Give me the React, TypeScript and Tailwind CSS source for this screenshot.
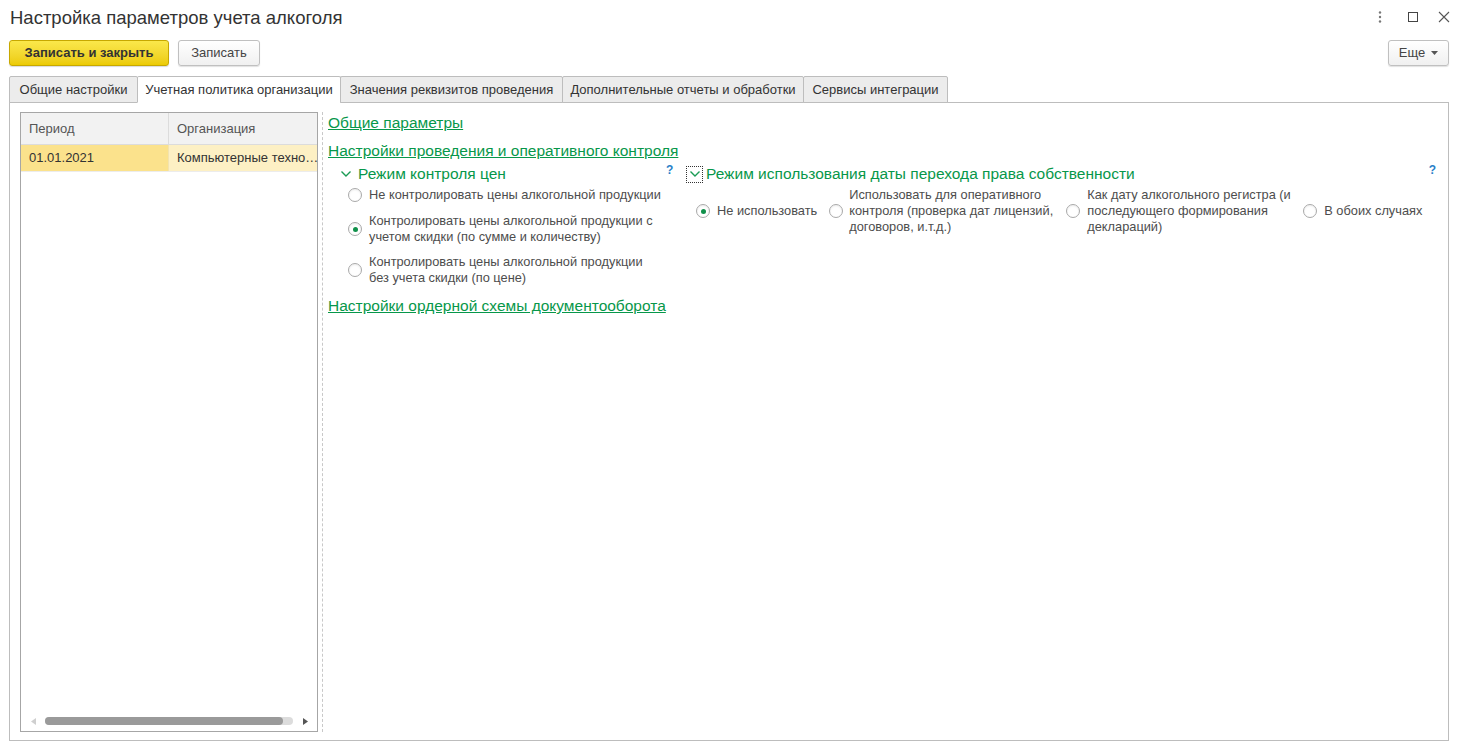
import React from 'react';

const GREEN = 'text-[#07974a]';

const Radio: React.FC<{ checked?: boolean }> = ({ checked }) => (
  <span className="w-[14px] h-[14px] shrink-0 rounded-full border border-[#a9a9a9] bg-white flex items-center justify-center shadow-[inset_0_1px_2px_rgba(0,0,0,0.08)]">
    {checked && <span className="w-[5px] h-[5px] rounded-full bg-[#10904a]" />}
  </span>
);

const Chevron: React.FC = () => (
  <svg width="12" height="8" viewBox="0 0 12 8" className="shrink-0">
    <path d="M1.5 1.5 L6 6 L10.5 1.5" fill="none" stroke="#1a9b54" strokeWidth="1.4" />
  </svg>
);

const tabs = [
  { label: 'Общие настройки', w: 'w-[129px]' },
  { label: 'Учетная политика организации', w: 'w-[204px]', active: true },
  { label: 'Значения реквизитов проведения', w: 'w-[223px]' },
  { label: 'Дополнительные отчеты и обработки', w: 'w-[242px]' },
  { label: 'Сервисы интеграции', w: 'w-[145px]' },
];

export default function App() {
  return (
    <div className="w-[1458px] h-[743px] bg-white font-['Liberation_Sans',Arial,sans-serif] text-[#4d4d4d] flex flex-col overflow-hidden">
      {/* Title bar */}
      <div className="h-[40px] flex items-start pl-[10px] pr-[8px] pt-[7px]">
        <div className="text-[18.5px] leading-[22px] text-[#333]">Настройка параметров учета алкоголя</div>
        <div className="ml-auto flex items-center gap-[20px] pt-[3px] text-[#555]">
          <svg width="4" height="14" viewBox="0 0 4 14">
            <circle cx="2" cy="2.5" r="1.2" fill="#777" />
            <circle cx="2" cy="7" r="1.2" fill="#777" />
            <circle cx="2" cy="11.5" r="1.2" fill="#777" />
          </svg>
          <span className="w-[10px] h-[10px] border border-[#444] ml-[6px]" />
          <svg width="12" height="12" viewBox="0 0 12 12">
            <path d="M1 1 L11 11 M11 1 L1 11" stroke="#555" strokeWidth="1.1" />
          </svg>
        </div>
      </div>

      {/* Command bar */}
      <div className="h-[26px] flex items-center pl-[9px] pr-[9px] gap-[9px]">
        <button className="h-[26px] w-[160px] rounded-[3px] border border-[#c7a800] bg-gradient-to-b from-[#fbe84a] to-[#eccb00] text-[13px] font-bold text-[#333] shadow-[0_1px_1px_rgba(0,0,0,0.15)]">
          Записать и закрыть
        </button>
        <button className="h-[26px] w-[82px] rounded-[3px] border border-[#c0c0c0] bg-gradient-to-b from-white to-[#f0f0f0] text-[13px] text-[#444] shadow-[0_1px_1px_rgba(0,0,0,0.12)]">
          Записать
        </button>
        <button className="ml-auto h-[26px] w-[61px] rounded-[3px] border border-[#c0c0c0] bg-gradient-to-b from-white to-[#f0f0f0] text-[13px] text-[#444] shadow-[0_1px_1px_rgba(0,0,0,0.12)] flex items-center justify-center gap-[6px]">
          Еще
          <svg width="7" height="4" viewBox="0 0 7 4">
            <path d="M0 0 L7 0 L3.5 4 Z" fill="#555" />
          </svg>
        </button>
      </div>

      {/* Tabs */}
      <div className="mt-[10px] pl-[9px] flex h-[27px] relative z-10">
        {tabs.map((t) => (
          <div
            key={t.label}
            className={`${t.w} h-[27px] -ml-px first:ml-0 border border-[#bdbdbd] rounded-t-[2px] flex items-center justify-center text-[13px] ${
              t.active ? 'bg-white border-b-white text-[#333]' : 'bg-[#ececec] border-b-[#bdbdbd] text-[#333] h-[26px]'
            }`}
          >
            {t.label}
          </div>
        ))}
      </div>

      {/* Panel */}
      <div className="mx-[9px] -mt-px mb-[2px] border border-[#bdbdbd] flex-1 flex pt-[9px] pb-[8px] pl-[10px] pr-[8px] min-h-0">
        {/* Table */}
        <div className="w-[298px] border border-[#a6a6a6] flex flex-col shrink-0">
          <div className="h-[32px] flex bg-[#f2f2f2] border-b border-[#dcdcdc] text-[13px] text-[#555]">
            <div className="w-[148px] border-r border-[#dcdcdc] flex items-center pl-[8px]">Период</div>
            <div className="flex-1 flex items-center pl-[8px]">Организация</div>
          </div>
          <div className="h-[27px] flex text-[13px] text-[#333] border-b border-[#ececec]">
            <div className="w-[148px] bg-[#fbe28c] border-r border-[#f2e3b0] flex items-center pl-[8px]">01.01.2021</div>
            <div className="flex-1 bg-[#fdf0c4] flex items-center pl-[8px] min-w-0 whitespace-nowrap">
              Компьютерные техно…
            </div>
          </div>
          <div className="flex-1" />
          <div className="h-[20px] flex items-center pl-[10px] pr-[9px] gap-[9px]">
            <svg width="5" height="7" viewBox="0 0 5 7">
              <path d="M5 0 L0 3.5 L5 7 Z" fill="#cfcfcf" />
            </svg>
            <div className="flex-1 h-[8px] rounded-full bg-[#dcdcdc] flex pr-[10px]">
              <div className="flex-1 h-[8px] rounded-full bg-[#9a9a9a]" />
            </div>
            <svg width="5" height="7" viewBox="0 0 5 7" className="ml-[1px]">
              <path d="M0 0 L5 3.5 L0 7 Z" fill="#555" />
            </svg>
          </div>
        </div>

        {/* Separator */}
        <div className="w-[7px] shrink-0 flex justify-center ml-[1px]">
          <div className="h-full border-l border-dashed border-[#c8c8c8]" />
        </div>

        {/* Content */}
        <div className="flex-1 pl-[2px] pt-[1px] flex flex-col">
          <a className={`${GREEN} underline text-[15.5px] leading-[20px] self-start`}>Общие параметры</a>
          <a className={`${GREEN} underline text-[15.5px] leading-[20px] self-start mt-[8px]`}>
            Настройки проведения и оперативного контроля
          </a>

          <div className="flex mt-[3px]">
            {/* Left group */}
            <div className="w-[358px] shrink-0">
              <div className="h-[20px] flex items-center pl-[12px] relative">
                <Chevron />
                <span className={`${GREEN} text-[15.5px] ml-[6px]`}>Режим контроля цен</span>
                <span className="absolute left-[338px] -top-[3px] text-[12px] font-bold text-[#2a7fc8]">?</span>
              </div>
              <div className="pl-[20px] mt-[3px] flex flex-col gap-[9px] text-[12.8px] leading-[16px] text-[#4d4d4d]">
                <div className="flex items-center gap-[7px]">
                  <Radio />
                  <span>Не контролировать цены алкогольной продукции</span>
                </div>
                <div className="flex items-center gap-[7px] mt-[1px]">
                  <Radio checked />
                  <span className="w-[300px]">
                    Контролировать цены алкогольной продукции с учетом скидки (по сумме и количеству)
                  </span>
                </div>
                <div className="flex items-center gap-[7px]">
                  <Radio />
                  <span className="w-[290px]">
                    Контролировать цены алкогольной продукции без учета скидки (по цене)
                  </span>
                </div>
              </div>
            </div>

            {/* Right group */}
            <div className="flex-1">
              <div className="h-[20px] flex items-center relative">
                <span className="w-[17px] h-[17px] border border-dotted border-[#333] flex items-center justify-center">
                  <Chevron />
                </span>
                <span className={`${GREEN} text-[15.5px] ml-[3px]`}>
                  Режим использования даты перехода права собственности
                </span>
                <span className="absolute right-[4px] -top-[3px] text-[12px] font-bold text-[#2a7fc8]">?</span>
              </div>
              <div className="mt-[3px] pl-[10px] flex items-center text-[12.8px] leading-[16px] text-[#4d4d4d]">
                <div className="flex items-center gap-[7px]">
                  <Radio checked />
                  <span>Не использовать</span>
                </div>
                <div className="flex items-center gap-[6px] ml-[12px]">
                  <Radio />
                  <span className="w-[222px]">
                    Использовать для оперативного контроля (проверка дат лицензий, договоров, и.т.д.)
                  </span>
                </div>
                <div className="flex items-center gap-[7px] -ml-[5px]">
                  <Radio />
                  <span className="w-[210px]">
                    Как дату алкогольного регистра (и последующего формирования деклараций)
                  </span>
                </div>
                <div className="flex items-center gap-[7px] ml-[6px]">
                  <Radio />
                  <span>В обоих случаях</span>
                </div>
              </div>
            </div>
          </div>

          <a className={`${GREEN} underline text-[15.5px] leading-[20px] self-start mt-[10px]`}>
            Настройки ордерной схемы документооборота
          </a>
        </div>
      </div>
    </div>
  );
}
